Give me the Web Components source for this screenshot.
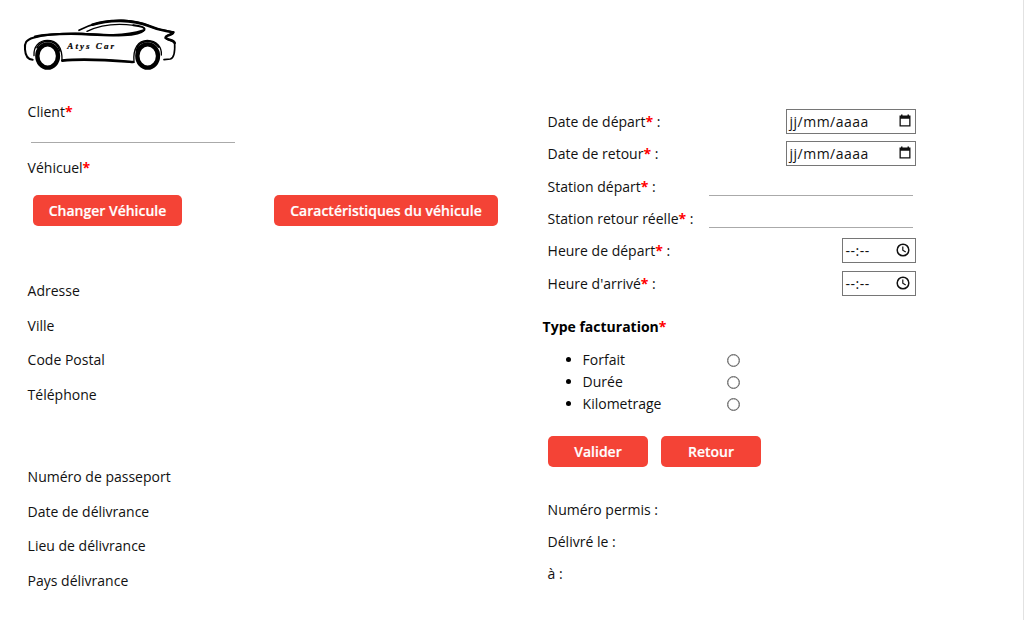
<!DOCTYPE html>
<html lang="fr"><head><meta charset="utf-8"><title>Atys Car</title>
<style>html,body{margin:0;height:100%;overflow:hidden;background:#fff}</style></head><body>
<rental-page></rental-page>
<script>
function define(name, html) {
  const t = document.createElement('template');
  customElements.define(name, class extends HTMLElement {
    constructor() {
      super();
      t.innerHTML = typeof html === 'function' ? html(this) : html;
      this.attachShadow({mode: 'open'}).appendChild(t.content.cloneNode(true));
    }
  });
}
define('car-logo', `<style>:host{display:block;width:170px;height:70px}svg{display:block}</style>
<svg width="170" height="70" viewBox="0 0 510 210" fill="none" stroke="#000" stroke-linecap="round">
<path d="M53 149C36 148 31 137 30 118C28 99 33 89 55 83C105 70 158 70 205 71C250 73 285 78 326 76C356 74 381 68 388 60C392 52 376 48 355 46" stroke-width="6"/>
<path d="M60 80C100 70 150 71 200 72C260 76 330 80 384 62" stroke-width="7"/>
<path d="M216 64C252 46 305 39 357 46" stroke-width="4"/>
<path d="M192 61C230 40 280 30 326 31C365 32 392 42 418 54C442 62 463 62 476 66C474 76 450 73 452 84C457 92 477 91 479 99C480 119 480 143 466 147L447 149" stroke-width="5"/>
<path d="M232 44C282 28 353 28 402 48C435 62 454 62 474 68" stroke-width="8"/>
<path d="M474 68C472 76 450 74 452 84C457 90 477 89 479 99" stroke-width="8"/>
<path d="M57 137C55 110 72 91 97 91C126 91 142 112 141 151L180 149C237 148 302 150 357 157C353 112 371 92 397 91C426 92 441 113 439 135" stroke-width="4"/>
<path d="M142 152C210 144 290 151 354 156" stroke-width="8"/>
<path d="M66 113Q75 94 98 94Q127 94 135 123M364 122Q369 95 397 94Q418 94 431 111" stroke-width="5"/>
<ellipse cx="98" cy="138" rx="31" ry="35" stroke-width="13"/><ellipse cx="398" cy="138" rx="31" ry="35" stroke-width="13"/>
<text x="157" y="117" fill="#000" stroke="#000" stroke-width=".6" font-family="Liberation Serif,serif" font-style="italic" font-weight="bold" font-size="27" textLength="140" lengthAdjust="spacing">Atys Car</text>
</svg>`);
define('field-label', e => `<style>:host{display:block;line-height:20px;white-space:nowrap}b{color:#f00}</style><slot></slot>${e.hasAttribute('required') ? '<b>*</b>' : ''}${e.hasAttribute('colon') ? ' :' : ''}`);
define('line-input', `<style>:host{display:block;width:204px;height:20px;border-bottom:1px solid #aaa}</style>`);
define('red-button', `<style>:host{display:flex;box-sizing:border-box;height:31px;align-items:center;justify-content:center;background:#f44336;color:#fff;border-radius:5px;font-weight:600;-webkit-text-stroke:.2px #fff;white-space:nowrap;line-height:20px}</style><slot></slot>`);
define('picker-input', e => `<style>:host{display:flex;box-sizing:border-box;height:25px;border:1px solid #767676;align-items:center;justify-content:space-between;line-height:20px;padding:0 4px 0 3px;width:130px;letter-spacing:.48px;margin-top:-.8px}
:host([type=time]){width:74px;padding-right:4.5px;letter-spacing:.5px}span{padding-top:.8px}svg{display:block;margin-top:-1px}</style>
<span><slot></slot></span>${e.getAttribute('type') === 'time'
 ? '<svg width="14" height="14" viewBox="0 0 14 14" fill="none" stroke="#111"><circle cx="7" cy="7" r="5.8" stroke-width="1.5"/><path d="M6.8 3.5V7.2L9.7 9" stroke-width="1.2"/></svg>'
 : '<svg width="12" height="14" viewBox="0 0 12 14"><path d="M.5 1.5H2V.5h1.5v1h5v-1H10v1h1.5v11H.5zM1.8 4.8v6.5h8.4V4.8z" fill="#111" fill-rule="evenodd"/></svg>'}`);
define('form-row', `<style>:host{display:flex;align-items:center;height:32.3px;width:368px;justify-content:space-between}::slotted(line-input){margin-right:3px;height:17px}</style><slot></slot>`);
define('choice-row', `<style>:host{display:flex;align-items:center;height:22px;line-height:20px}i{width:5px;height:5px;border-radius:50%;background:#000;margin:0 11.5px 0 18.5px}span{width:144px}u{box-sizing:border-box;width:13px;height:13px;border:1.3px solid #666;box-shadow:inset 0 0 0 .3px #666;border-radius:50%;margin-top:1px}</style><i></i><span><slot></slot></span><u></u>`);
define('info-group', `<style>:host{display:block}::slotted(field-label){line-height:var(--pitch,34.6px)!important;height:var(--pitch,34.6px)}</style><slot></slot>`);
define('rental-page', `<style>
:host{display:block;box-sizing:border-box;height:620px;border-right:1px solid #e2e2e2;font:14px "Open Sans",sans-serif;color:#111;padding:10px 0 0 15px}
main{display:grid;grid-template-columns:515px 1fr;padding-left:12.6px}
.left{padding-top:22px}.left line-input{margin:0 0 15px 3.4px}
.left .btns{display:flex;gap:92px;margin:17px 0 48.1px 5.4px}
.left .gap{margin-top:47.6px}
.right{padding:25.9px 0 0 5px}
h4{margin:16.4px 0 11.7px -5px;font-size:14px;font-weight:700;line-height:21px;color:#000}h4 em{color:#f00;font-style:normal}
.act{display:flex;gap:13px;margin:21.5px 0 27.2px .4px}.act red-button{width:100px}
</style>
<car-logo></car-logo>
<main><section class="left">
<field-label required>Client</field-label><line-input></line-input>
<field-label required>Véhicuel</field-label>
<div class="btns"><red-button style="width:149px">Changer Véhicule</red-button><red-button style="width:224px">Caractéristiques du véhicule</red-button></div>
<info-group><field-label>Adresse</field-label><field-label>Ville</field-label><field-label>Code Postal</field-label><field-label>Téléphone</field-label></info-group>
<info-group class="gap"><field-label>Numéro de passeport</field-label><field-label>Date de délivrance</field-label><field-label>Lieu de délivrance</field-label><field-label>Pays délivrance</field-label></info-group>
</section><section class="right">
<form-row><field-label required colon>Date de départ</field-label><picker-input type="date">jj/mm/aaaa</picker-input></form-row>
<form-row><field-label required colon>Date de retour</field-label><picker-input type="date">jj/mm/aaaa</picker-input></form-row>
<form-row><field-label required colon>Station départ</field-label><line-input></line-input></form-row>
<form-row><field-label required colon>Station retour réelle</field-label><line-input></line-input></form-row>
<form-row><field-label required colon>Heure de départ</field-label><picker-input type="time">--:--</picker-input></form-row>
<form-row><field-label required colon>Heure d'arrivé</field-label><picker-input type="time">--:--</picker-input></form-row>
<h4>Type facturation<em>*</em></h4>
<choice-row>Forfait</choice-row><choice-row>Durée</choice-row><choice-row>Kilometrage</choice-row>
<div class="act"><red-button>Valider</red-button><red-button>Retour</red-button></div>
<info-group style="--pitch:32px"><field-label>Numéro permis :</field-label><field-label>Délivré le :</field-label><field-label>à :</field-label></info-group>
</section></main>`);
</script></body></html>
